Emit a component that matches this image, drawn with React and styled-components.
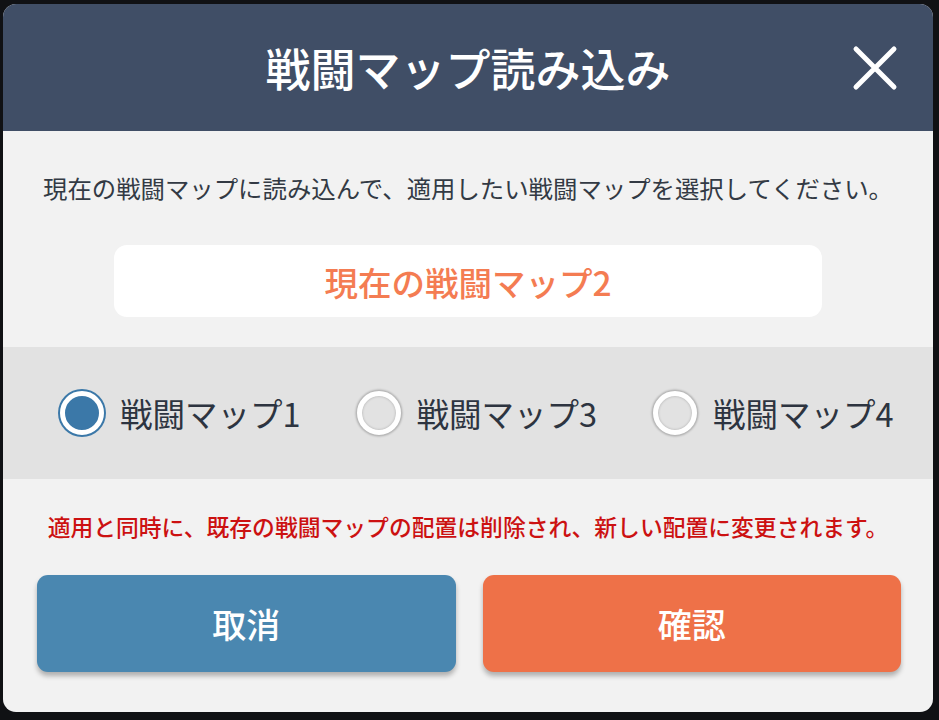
import React, { useState } from 'react';
import styled, { createGlobalStyle } from 'styled-components';

const GlobalStyle = createGlobalStyle`
  html, body {
    margin: 0;
    padding: 0;
    background: #101114;
  }
  body {
    font-family: "Noto Sans CJK JP", "Noto Sans", sans-serif;
  }
`;

const Backdrop = styled.div`
  width: 939px;
  height: 720px;
  box-sizing: border-box;
  padding: 4px 6px 8px 3px;
`;

const Modal = styled.div`
  width: 930px;
  height: 708px;
  border-radius: 13px;
  overflow: hidden;
  background: #f2f2f2;
  display: flex;
  flex-direction: column;
`;

const Header = styled.div`
  height: 127px;
  background: #404e66;
  display: grid;
  grid-template-columns: 1fr auto 1fr;
  align-items: center;
`;

const Title = styled.h1`
  grid-column: 2;
  margin: 0;
  color: #ffffff;
  font-size: 45px;
  font-weight: 500;
  line-height: 1;
`;

const CloseButton = styled.button`
  grid-column: 3;
  justify-self: end;
  margin-right: 34px;
  width: 48px;
  height: 48px;
  padding: 0;
  border: none;
  background: transparent;
  display: flex;
  align-items: center;
  justify-content: center;
  cursor: pointer;
`;

const Description = styled.p`
  margin: 40px 0 0;
  text-align: center;
  color: #333a44;
  font-size: 24.4px;
  line-height: 34px;
`;

const CurrentBox = styled.div`
  margin: 40px auto 0;
  width: 708px;
  height: 72px;
  border-radius: 13px;
  background: #ffffff;
  display: flex;
  align-items: center;
  justify-content: center;
  color: #f47c52;
  font-size: 33.5px;
  font-weight: 500;
`;

const OptionBand = styled.div`
  margin-top: 30px;
  height: 132px;
  background: #e2e2e2;
  display: flex;
  align-items: center;
  padding-left: 57px;
  gap: 56px;
`;

const Option = styled.label`
  display: flex;
  align-items: center;
  gap: 16px;
  cursor: pointer;
  color: #2d3440;
  font-size: 32.5px;
  line-height: 1;
`;

const RadioDot = styled.span`
  width: 44px;
  height: 44px;
  box-sizing: border-box;
  border-radius: 50%;
  flex-shrink: 0;
  background: ${p => (p.$checked ? '#3b78a8' : '#e2e2e2')};
  border: 5px solid #ffffff;
  box-shadow: ${p =>
    p.$checked
      ? '0 0 0 2px #3b78a8'
      : '0 0 2px 1.5px rgba(0,0,0,0.22), inset 0 0 2px 1px rgba(0,0,0,0.12)'};
`;

const Warning = styled.p`
  margin: 32px 0 0;
  text-align: center;
  color: #cc1111;
  font-size: 22.8px;
  font-weight: 500;
  line-height: 32px;
`;

const ButtonRow = styled.div`
  margin-top: 32px;
  padding: 0 32px 0 34px;
  display: grid;
  grid-template-columns: 1fr 1fr;
  gap: 27px;
`;

const ActionButton = styled.button`
  height: 97px;
  border: none;
  border-radius: 11px;
  background: ${p => p.$bg};
  color: #ffffff;
  font-family: inherit;
  font-size: 34px;
  font-weight: 500;
  box-shadow: 0 4px 5px rgba(0, 0, 0, 0.28);
  cursor: pointer;
`;

const maps = ['戦闘マップ1', '戦闘マップ3', '戦闘マップ4'];

export default function App() {
  const [selected, setSelected] = useState(maps[0]);

  return (
    <>
      <GlobalStyle />
      <Backdrop>
        <Modal>
          <Header>
            <Title>戦闘マップ読み込み</Title>
            <CloseButton aria-label="close">
              <svg width="46" height="46" viewBox="0 0 46 46">
                <path d="M4 4 L42 42 M42 4 L4 42" stroke="#ffffff" strokeWidth="5" strokeLinecap="round" />
              </svg>
            </CloseButton>
          </Header>
          <Description>現在の戦闘マップに読み込んで、適用したい戦闘マップを選択してください。</Description>
          <CurrentBox>現在の戦闘マップ2</CurrentBox>
          <OptionBand>
            {maps.map(m => (
              <Option key={m} onClick={() => setSelected(m)}>
                <RadioDot $checked={selected === m} />
                {m}
              </Option>
            ))}
          </OptionBand>
          <Warning>適用と同時に、既存の戦闘マップの配置は削除され、新しい配置に変更されます。</Warning>
          <ButtonRow>
            <ActionButton $bg="#4a87b0">取消</ActionButton>
            <ActionButton $bg="#ee7148">確認</ActionButton>
          </ButtonRow>
        </Modal>
      </Backdrop>
    </>
  );
}
